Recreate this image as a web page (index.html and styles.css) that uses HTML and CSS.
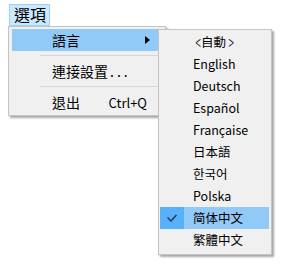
FILE: index.html
```html
<!DOCTYPE html>
<html>
<head>
<meta charset="utf-8">
<link rel="stylesheet" href="styles.css">
</head>
<body>
<div class="screen">
  <div class="menubar">
    <div class="bar-item">選項</div>
  </div>

  <div class="menu main-menu">
    <div class="item active">
      <span class="label">語言</span>
      <svg class="arrow" width="5" height="8" viewBox="0 0 5 8"><path d="M0 0 L5 4 L0 8 Z" fill="#000"/></svg>
    </div>
    <div class="sep"></div>
    <div class="item">
      <span class="label">連接設置<span class="dots">...</span></span>
    </div>
    <div class="sep"></div>
    <div class="item">
      <span class="label">退出</span>
      <span class="shortcut">Ctrl+Q</span>
    </div>
  </div>

  <div class="menu sub-menu">
    <div class="sitem"><span class="check"></span><span class="slabel"><span class="br">&lt;</span>自動<span class="br">&gt;</span></span></div>
    <div class="sitem"><span class="check"></span><span class="slabel">English</span></div>
    <div class="sitem"><span class="check"></span><span class="slabel">Deutsch</span></div>
    <div class="sitem"><span class="check"></span><span class="slabel">Español</span></div>
    <div class="sitem"><span class="check"></span><span class="slabel">Française</span></div>
    <div class="sitem"><span class="check"></span><span class="slabel">日本語</span></div>
    <div class="sitem"><span class="check"></span><span class="slabel">한국어</span></div>
    <div class="sitem"><span class="check"></span><span class="slabel">Polska</span></div>
    <div class="sitem active"><span class="check checked"><svg width="24" height="22" viewBox="0 0 24 22"><polyline points="7.5,10.5 11,14 16.5,8" fill="none" stroke="#1e3550" stroke-width="1.4"/></svg></span><span class="slabel">简体中文</span></div>
    <div class="sitem"><span class="check"></span><span class="slabel">繁體中文</span></div>
  </div>
</div>
</body>
</html>
```
FILE: styles.css
```css
html, body {
  margin: 0;
  padding: 0;
  background: #ffffff;
}

body {
  font-family: "Noto Sans CJK TC", "Noto Sans CJK SC", "Noto Sans CJK KR", sans-serif;
  color: #000;
}

.screen {
  position: relative;
  width: 284px;
  height: 264px;
  overflow: hidden;
}

.menubar {
  display: flex;
  padding: 4px 0 0 9px;
}

.bar-item {
  box-sizing: border-box;
  width: 41px;
  height: 22px;
  border: 1px solid #99d1ff;
  background: #cce8ff;
  font-size: 16px;
  line-height: 19px;
  padding-left: 4px;
}

.menu {
  position: absolute;
  box-sizing: border-box;
  background: #f0f0f0;
  border: 1px solid #c4c4c4;
  box-shadow: 2px 2px 2px rgba(0, 0, 0, 0.35);
}

.main-menu {
  left: 8px;
  top: 26px;
  width: 158px;
  padding: 2px 3px 2px 3px;
  display: flex;
  flex-direction: column;
}

.item {
  height: 22px;
  display: flex;
  align-items: center;
  padding: 0 12px 0 40px;
  font-size: 14px;
}

.item.active {
  background: #91c9f7;
}

.label {
  flex: 1;
  line-height: 22px;
}

.dots {
  letter-spacing: 3px;
  padding-left: 2px;
}

.shortcut {
  font-size: 13px;
  margin-right: 3px;
}

.arrow {
  display: block;
}

.sep {
  height: 9px;
  display: flex;
  align-items: center;
  padding-left: 28px;
}

.sep::before {
  content: "";
  flex: 1;
  height: 1px;
  background: #d7d7d7;
}

.sub-menu {
  left: 158px;
  top: 29px;
  width: 114px;
  padding: 1px 2px 3px 1px;
  display: flex;
  flex-direction: column;
}

.sitem {
  height: 22px;
  display: flex;
  align-items: center;
  font-size: 12.5px;
}

.sitem.active {
  background: #91c9f7;
}

.check {
  width: 24px;
  height: 22px;
  flex: none;
}

.check svg {
  display: block;
}

.check.checked {
  background: #56b0fa;
}

.slabel {
  padding-left: 9px;
  line-height: 22px;
}

.br {
  display: inline-block;
  font-size: 20px;
  font-weight: 300;
  line-height: 22px;
  width: 6px;
  text-align: center;
  transform: scale(0.5, 1);
  vertical-align: top;
  margin: 0 1px;
}
```
